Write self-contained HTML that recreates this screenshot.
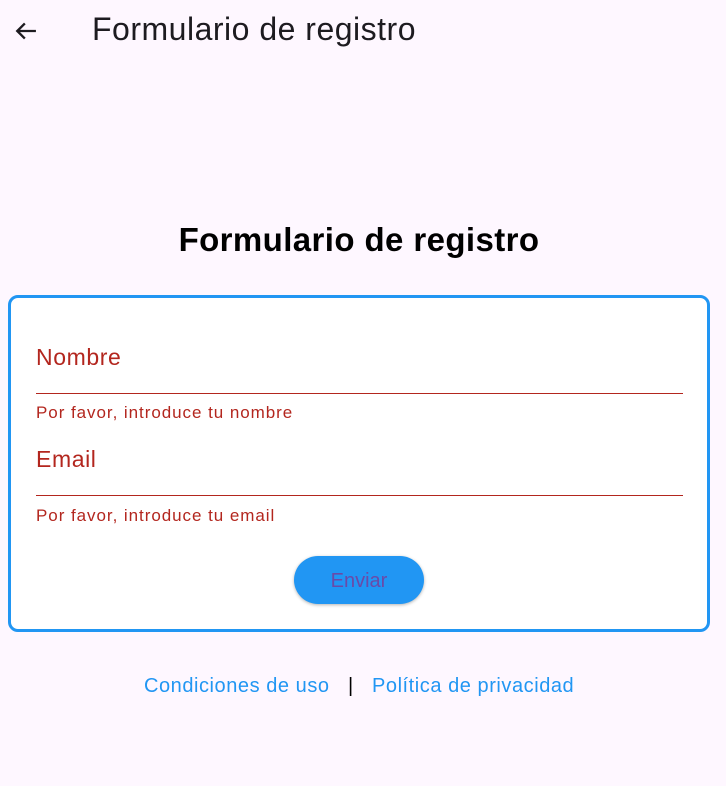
<!DOCTYPE html>
<html><head><meta charset="utf-8"><style>
*{margin:0;padding:0;box-sizing:border-box}
body{width:726px;height:786px;background:#fef7ff;font-family:"Liberation Sans",Roboto,sans-serif;position:relative;overflow:hidden}
.abs{position:absolute;white-space:nowrap}
</style></head><body>
<svg class="abs" style="left:12px;top:17px" width="28" height="28" viewBox="0 0 24 24"><path d="M20.5 12H4.5M11 5.5L4.5 12l6.5 6.5" fill="none" stroke="#1d1b20" stroke-width="2"/></svg>
<div class="abs" style="left:92px;top:11px;font-size:32px;letter-spacing:0.5px;color:#1d1b20;line-height:36px">Formulario de registro</div>
<div class="abs" style="left:0;width:718px;text-align:center;top:220px;font-size:33px;letter-spacing:0.4px;font-weight:bold;color:#000;line-height:40px">Formulario de registro</div>
<div class="abs" style="left:8px;top:295px;width:702px;height:337px;border:3px solid #2196f3;border-radius:10px;background:#fff"></div>
<div class="abs" style="left:36px;top:344px;font-size:23px;letter-spacing:0.6px;color:#b3261e">Nombre</div>
<div class="abs" style="left:36px;top:393px;width:647px;height:1px;background:#b3261e"></div>
<div class="abs" style="left:36px;top:403px;font-size:17px;letter-spacing:0.95px;color:#b3261e">Por favor, introduce tu nombre</div>
<div class="abs" style="left:36px;top:446px;font-size:23px;letter-spacing:0.6px;color:#b3261e">Email</div>
<div class="abs" style="left:36px;top:495px;width:647px;height:1px;background:#b3261e"></div>
<div class="abs" style="left:36px;top:506px;font-size:17px;letter-spacing:0.95px;color:#b3261e">Por favor, introduce tu email</div>
<div class="abs" style="left:294px;top:556px;width:130px;height:48px;border-radius:24px;background:#2196f3;box-shadow:0 1px 3px rgba(0,0,0,.3);color:#6a4aa8;font-size:20px;text-align:center;line-height:50px">Enviar</div>
<div class="abs" style="left:144px;top:675px;font-size:20px;letter-spacing:0.55px;color:#2196f3">Condiciones de uso</div>
<div class="abs" style="left:348px;top:675px;font-size:20px;color:#000">|</div>
<div class="abs" style="left:372px;top:675px;font-size:20px;letter-spacing:0.55px;color:#2196f3">Política de privacidad</div>
</body></html>
